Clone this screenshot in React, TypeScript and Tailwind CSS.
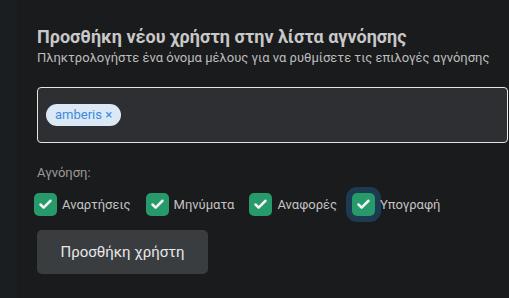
import { Check } from "lucide-react";

const options = [
  { label: "Αναρτήσεις", focused: false },
  { label: "Μηνύματα", focused: false },
  { label: "Αναφορές", focused: false },
  { label: "Υπογραφή", focused: true },
];

const App = () => {
  return (
    <div className="flex h-[298px] w-[509px] overflow-hidden bg-[#1b1e20] font-['Roboto',sans-serif]">
      <div className="ml-[17px] flex-1 bg-[#1a1b1d] pl-5 pt-[26px]">
        <h2 className="text-[18px] font-bold leading-[22px] text-[#c8c8c8]">
          Προσθήκη νέου χρήστη στην λίστα αγνόησης
        </h2>
        <p className="mt-[2px] text-[13px] leading-4 text-[#bdbdbd]">
          Πληκτρολογήστε ένα όνομα μέλους για να ρυθμίσετε τις επιλογές αγνόησης
        </p>
        <div className="mt-[21px] flex h-[56px] w-[471px] items-center rounded-[4px] border border-[#e5e5e5] bg-[#2e2f32] pl-2">
          <span className="rounded-full bg-[#dbe9f7] px-[9px] py-[2px] text-[13px] leading-[18px] text-[#3f8bd8]">
            amberis ×
          </span>
        </div>
        <div className="mt-[22px] text-[13px] leading-4 text-[#9a9a9a]">Αγνόηση:</div>
        <div className="-ml-[3px] mt-[12px] flex items-center">
          {options.map((o) => (
            <label key={o.label} className="mr-[15px] flex items-center">
              <span
                className={`flex items-center justify-center ${
                  o.focused ? "-m-[6px] rounded-[11px] border-[6px] border-[#1d3a50]" : ""
                }`}
              >
                <span className="flex h-[23px] w-[23px] items-center justify-center rounded-[5px] bg-[#279a6c]">
                  <Check size={15} strokeWidth={4} className="text-[#f2f2f2]" />
                </span>
              </span>
              <span className="ml-[5px] text-[13px] text-[#c3c3c3]">{o.label}</span>
            </label>
          ))}
        </div>
        <button className="mt-[14px] h-[44px] w-[171px] rounded-[5px] bg-[#3a3d40] text-[15px] text-[#e8e8e8]">
          Προσθήκη χρήστη
        </button>
      </div>
    </div>
  );
};

export default App;
